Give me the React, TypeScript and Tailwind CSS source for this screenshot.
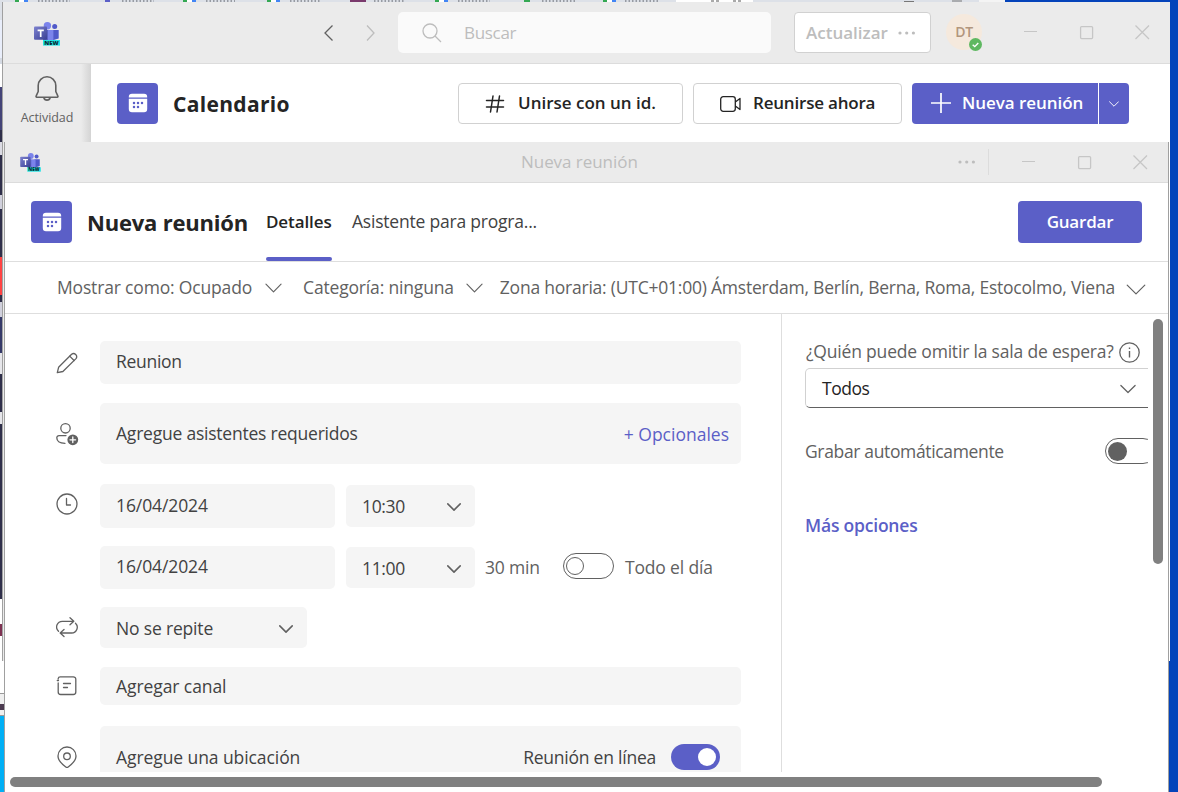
import type { ReactNode } from "react";

function TeamsLogo({ className }: { className: string }) {
  return (
    <svg viewBox="0 0 26 24" className={className}>
      <defs>
        <linearGradient id="teams-tile" x1="0" y1="0" x2="1" y2="1">
          <stop offset="0" stopColor="#7d82cf" />
          <stop offset="1" stopColor="#3a3f94" />
        </linearGradient>
      </defs>
      <circle cx="20.7" cy="4.4" r="2.5" fill="#5059c9" />
      <path d="M18 8H24.7V16.500L18 18.500Z" fill="#5059c9" />
      <circle cx="13.4" cy="3.800" r="3.700" fill="#7b83eb" />
      <path d="M9 8H19.400V18.500H9Z" fill="#7b83eb" />
      <path d="M9 8H14V18.500H9Z" fill="#5a62c3" />
      <rect x="0" y="4.600" width="13" height="13.200" rx="1" fill="url(#teams-tile)" />
      <path d="M3.600 8.400H9.800M6.700 8.400V15" stroke="#fff" strokeWidth="1.700" />
      <rect x="9" y="18" width="17" height="5.600" fill="#1fe3e3" />
      <text x="10.300" y="22.900" fontSize="5.800" fontWeight="800" textLength="14.400" lengthAdjust="spacingAndGlyphs" letterSpacing="0" fontFamily="Open Sans, sans-serif" fill="#0b2b33">NEW</text>
    </svg>
  );
}

function CalendarTile({ className }: { className: string }) {
  return (
    <div className={`flex w-[41px] shrink-0 items-center justify-center rounded-[4px] bg-[#5b5fc7] ${className}`}>
      <svg viewBox="0 0 20 20" className="size-[20px]">
        <path d="M.8 4.5V4A3.2 3.2 0 0 1 4 .8H16A3.2 3.2 0 0 1 19.2 4V4.5Z" fill="#fff" />
        <path d="M.8 5.700H19.200V16A3.200 3.200 0 0 1 16 19.200H4A3.200 3.200 0 0 1 .8 16Z" fill="#fff" />
        <g fill="#5b5fc7">
          <circle cx="6" cy="10" r="1.250" />
          <circle cx="10" cy="10" r="1.250" />
          <circle cx="14" cy="10" r="1.250" />
          <circle cx="6" cy="14" r="1.250" />
          <circle cx="10" cy="14" r="1.250" />
        </g>
      </svg>
    </div>
  );
}

function Chevron({ className }: { className: string }) {
  return (
    <svg viewBox="0 0 18 10" className={className} fill="none" stroke="currentColor">
      <path d="M1 1L9 9L17 1" strokeLinecap="round" strokeLinejoin="round" />
    </svg>
  );
}

function Dots({ className }: { className: string }) {
  return (
    <svg viewBox="0 0 18 4" className={className} fill="currentColor">
      <circle cx="2" cy="2" r="1.600" />
      <circle cx="8.700" cy="2" r="1.600" />
      <circle cx="15.400" cy="2" r="1.600" />
    </svg>
  );
}

function WindowControls() {
  return (
    <svg viewBox="0 0 126 15" className="h-[15px] w-[126px] shrink-0" fill="none" stroke="#c6c6c6">
      <path d="M0 6.500H13" />
      <rect x="56.600" y="1.600" width="12" height="12" rx="1" strokeWidth="1.300" />
      <path d="M111.500 .5L125 14M125 .5L111.500 14" strokeWidth="1.300" />
    </svg>
  );
}

function Icon({ children, className = "" }: { children: ReactNode; className?: string }) {
  return (
    <svg
      viewBox="0 0 22 22"
      className={`h-[22px] w-[22px] shrink-0 ${className}`}
      fill="none"
      stroke="#616161"
      strokeWidth="1.300"
      strokeLinecap="round"
      strokeLinejoin="round"
    >
      {children}
    </svg>
  );
}

function Desktop() {
  return (
    <div className="flex h-full w-full">
      <div className="flex w-[5px] flex-col">
        <div className="h-[20px] bg-[#dde1e8]" />
        <div className="h-[38px] bg-[#e9eefb]" />
        <div className="h-[6px] bg-[#d5dae3]" />
        <div className="h-[23px] bg-white" />
        <div className="h-[43px] bg-[#444478]" />
        <div className="h-[12px] bg-[#2f2f4a]" />
        <div className="h-[13px] bg-[#dcdce4]" />
        <div className="h-[40px] bg-[#2f2f4a]" />
        <div className="h-[14px] bg-[#d0d0dc]" />
        <div className="h-[48px] bg-[#2f2f4a]" />
        <div className="h-[38px] bg-[#ff4343]" />
        <div className="h-[7px] bg-[#2f2f4a]" />
        <div className="h-[15px] bg-[#d0d0dc]" />
        <div className="h-[36px] bg-[#353968]" />
        <div className="h-[21px] bg-[#e6e6ea]" />
        <div className="h-[38px] bg-[#2f2f4a]" />
        <div className="h-[12px] bg-[#e6e6ea]" />
        <div className="h-[175px] bg-[#2f2f4a]" />
        <div className="h-[25px] bg-white" />
        <div className="h-[12px] bg-[#7d3252]" />
        <div className="h-[57px] bg-white" />
        <div className="h-px bg-[#999]" />
        <div className="h-[21px] bg-[#efefef] pt-[10px]">
          <div className="h-[6px] w-[4px] bg-[#4b3a4f]" />
        </div>
        <div className="h-px bg-[#999]" />
        <div className="flex-1 bg-[#00aff5]" />
      </div>
      <div className="flex-1 bg-[#dde1e8]">
        <svg viewBox="0 0 1000 2" className="h-[2px] w-[1000px]">
          {[12, 180, 264, 432, 600].map((x) => (
            <g key={x}>
              <rect x={x - 2} width="4" height="2" fill="#34a853" />
              <rect x={x + 2} width="5" height="2" fill="#fff" />
              <rect x={x + 7} width="4" height="2" fill="#4285f4" />
            </g>
          ))}
          <rect x="100" width="5" height="2" fill="#5b5fc7" />
          <rect x="345" width="16" height="2" fill="#7a3a6d" />
          <rect x="519" width="6" height="2" fill="#34a853" />
          <path
            d="M33 1H65M117 1H149M201 1H230M285 1H316M369 1H400M453 1H485M537 1H570M620 1H653"
            stroke="#81858c"
            strokeWidth="1.400"
            strokeDasharray="1.5 2"
          />
          <rect x="671" width="77" height="2" fill="#fff" />
          <path d="M706 1H716M728 1H738" stroke="#555" strokeDasharray="3 2" />
          <path d="M899 1.500H909M947 1H957" stroke="#777" />
          <rect x="974" width="26" height="2" fill="#f4f4f4" />
        </svg>
      </div>
      <div className="w-[176px] bg-[#0443ba]" />
    </div>
  );
}

function MainWindow() {
  return (
    <section className="absolute top-[2px] left-[2px] flex h-[659px] w-[1168px] flex-col border-l border-[#a0a0a0] bg-white">
      <header className="flex h-[62px] shrink-0 border-b border-[#dcdcdc] bg-[#ebebeb]">
        <TeamsLogo className="mt-[20px] ml-[31px] h-[24px] w-[26px]" />
        <svg viewBox="0 0 54 18" className="mt-[22px] ml-[262px] h-[18px] w-[54px]" fill="none" strokeWidth="1.300">
          <path d="M10.500 1.500L3 9L10.500 16.500" stroke="#616161" />
          <path d="M45 1.500L52 9L45 16.500" stroke="#bdbdbd" />
        </svg>
        <div className="mt-[10px] ml-[22px] flex h-[41px] w-[373px] items-center rounded-[5px] bg-[#fafafa] pl-[24px]">
          <svg viewBox="0 0 20 20" className="size-[20px]" fill="none" stroke="#bdbdbd" strokeWidth="1.300">
            <circle cx="8" cy="8" r="7" />
            <path d="M13 13L19 19" />
          </svg>
          <span className="ml-[22px] text-[17px] tracking-[-0.3px] text-[#bdbdbd]">Buscar</span>
        </div>
        <div className="mt-[10px] ml-[23px] flex h-[41px] w-[137px] items-center rounded-[4px] border border-[#d1d1d1] bg-white pl-[11px] text-[#bdbdbd]">
          <span className="text-[17px] font-semibold tracking-[0]">Actualizar</span>
          <Dots className="ml-[10px] h-[4px] w-[18px]" />
        </div>
        <div className="relative mt-[12px] ml-[15px] flex size-[36px] items-center justify-center rounded-full bg-[#f5e9dd]">
          <span className="text-[14px] font-semibold tracking-[-0.3px] text-[#b2967d]">DT</span>
          <svg viewBox="0 0 14 14" className="absolute top-[24px] left-[23px] size-[13px]">
            <circle cx="7" cy="7" r="7" fill="#5fb861" />
            <path d="M4 7.200L6.200 9.300L10 5.300" fill="none" stroke="#fff" strokeWidth="1.500" />
          </svg>
        </div>
        <div className="mt-[23px] ml-[42px]">
          <WindowControls />
        </div>
      </header>
      <div className="flex flex-1">
        <nav className="flex w-[88px] shrink-0 bg-[#ebebeb]">
          <div className="flex w-[88px] shrink-0 flex-col items-center">
            <svg viewBox="0 0 24 28" className="mt-[11px] mr-[1px] h-[28px] w-[24px]" fill="none" stroke="#616161" strokeWidth="1.600" strokeLinejoin="round">
              <path d="M12 1.800A8.800 8.800 0 0 0 3.200 10.600V16.500L1.100 21.200A.7.7 0 0 0 1.700 22.200H22.300A.7.7 0 0 0 22.900 21.200L20.800 16.500V10.600A8.800 8.800 0 0 0 12 1.800Z" />
              <path d="M8.800 22.500A3.300 3.500 0 0 0 15.200 22.500" />
            </svg>
            <span className="mt-[5px] text-[12.500px] leading-[20px] tracking-[-0.050px] text-[#616161]">Actividad</span>
          </div>
          <div className="-ml-[10px] w-[10px] bg-linear-to-r from-[#ebebeb] to-[#d4d4d4]" />
        </nav>
        <div className="flex h-[78px] flex-1 items-center pl-[26px]">
          <CalendarTile className="h-[41px]" />
          <h1 className="mt-[2px] ml-[15px] w-[285px] text-[21px] font-bold tracking-[0.320px] text-[#242424]">Calendario</h1>
          <button className="flex h-[41px] w-[225px] items-center rounded-[4px] border border-[#d1d1d1] pb-px pl-[26px] text-[#242424]">
            <svg viewBox="0 0 20 18" className="mt-[2px] h-[18px] w-[20px]" fill="none" stroke="currentColor" strokeWidth="1.500" strokeLinecap="round">
              <path d="M1.500 5.500H18.500M1.500 12H18.500M8 1L5.500 17M14.500 1L12 17" />
            </svg>
            <span className="ml-[13px] text-[17px] font-semibold tracking-[0]">Unirse con un id.</span>
          </button>
          <button className="ml-[10px] flex h-[41px] w-[209px] items-center rounded-[4px] border border-[#d1d1d1] pb-px pl-[26px] text-[#242424]">
            <svg viewBox="0 0 21 16" className="mt-[2px] h-[16px] w-[21px]" fill="none" stroke="currentColor" strokeWidth="1.300" strokeLinejoin="round">
              <rect x=".7" y=".7" width="14.600" height="14.600" rx="2.500" />
              <path d="M15.300 6L20 2.500V13.500L15.300 10" />
            </svg>
            <span className="ml-[12px] text-[17px] font-semibold tracking-[-0.200px]">Reunirse ahora</span>
          </button>
          <div className="ml-[10px] flex h-[41px] w-[217px] rounded-[4px] bg-[#5b5fc7] text-white">
            <button className="flex w-[187px] items-center border-r border-white pb-px pl-[19px]">
              <svg viewBox="0 0 20 20" className="mt-[1px] size-[20px]" stroke="currentColor" strokeWidth="1.700">
                <path d="M0 10H20M10 0V20" />
              </svg>
              <span className="ml-[11px] text-[17px] font-semibold tracking-[-0.050px]">Nueva reunión</span>
            </button>
            <button className="flex flex-1 items-center justify-center">
              <Chevron className="mt-[2px] h-[6px] w-[10px] stroke-[1.7]" />
            </button>
          </div>
        </div>
      </div>
    </section>
  );
}

function Toggle({ on = false, filled = false, className = "" }: { on?: boolean; filled?: boolean; className?: string }) {
  if (on) {
    return (
      <div className={`flex h-[26px] w-[49px] shrink-0 items-center justify-end rounded-full bg-[#5b5fc7] pr-[4px] ${className}`}>
        <div className="size-[18px] rounded-full bg-white" />
      </div>
    );
  }
  return (
    <div className={`flex h-[26px] w-[51px] shrink-0 items-center rounded-full border border-[#616161] pl-[2px] ${className}`}>
      <div className={filled ? "size-[19px] rounded-full bg-[#616161]" : "size-[18px] rounded-full border border-[#616161]"} />
    </div>
  );
}

function Filter({ children, chevron, className = "" }: { children: ReactNode; chevron: string; className?: string }) {
  return (
    <button className={`flex items-center whitespace-pre ${className}`}>
      <span>{children}</span>
      <Chevron className={chevron} />
    </button>
  );
}

function TimeSelect({ value, className }: { value: string; className: string }) {
  return (
    <div className={`ml-[11px] flex w-[129px] items-center justify-between rounded-[5px] bg-[#f5f5f5] pr-[14px] pl-[16px] ${className}`}>
      <span className="tracking-[-0.350px]">{value}</span>
      <Chevron className="mt-[2px] h-[8px] w-[14px] stroke-2 text-[#616161]" />
    </div>
  );
}

function MeetingForm() {
  return (
    <div className="flex w-[776px] shrink-0 flex-col pt-[27px] pl-[51px] text-[#424242]">
      <div className="flex h-[43px] shrink-0 items-center">
        <Icon>
          <path d="M1.300 20.700L2.600 15.300L15.600 2.200A3.150 3.150 0 0 1 20 6.600L6.900 19.500Z" />
          <path d="M13.700 4.100L18.100 8.500" />
        </Icon>
        <div className="ml-[22px] flex h-[43px] w-[641px] items-center rounded-[5px] bg-[#f5f5f5] pb-[3px] pl-[16px] tracking-[-0.300px]">Reunion</div>
      </div>
      <div className="mt-[19px] flex h-[61px] shrink-0 items-center">
        <Icon className="overflow-visible">
          <circle cx="9.500" cy="5.300" r="4.700" />
          <path d="M10 12.600H3A2.200 2.200 0 0 0 .8 14.800C.8 18.500 4 20.300 9 20.300" />
          <circle cx="16.800" cy="16.800" r="5.400" fill="#616161" stroke="none" />
          <path d="M16.800 14V19.600M14 16.800H19.600" stroke="#fff" />
        </Icon>
        <div className="ml-[22px] flex h-[61px] w-[641px] items-center justify-between rounded-[5px] bg-[#f5f5f5] pr-[12px] pb-px pl-[16px]">
          <span className="tracking-[-0.220px]">Agregue asistentes requeridos</span>
          <span className="mt-[2px] tracking-[0] text-[#5b5fc7]">+ Opcionales</span>
        </div>
      </div>
      <div className="mt-[20px] flex h-[44px] shrink-0">
        <Icon className="mt-[9px]">
          <circle cx="11" cy="11" r="10" />
          <path d="M10.500 5.500V12H14.500" />
        </Icon>
        <div className="ml-[22px] flex w-[235px] items-center rounded-[5px] bg-[#f5f5f5] pb-[3px] pl-[16px] tracking-[-0.100px]">16/04/2024</div>
        <TimeSelect value="10:30" className="mt-[1px] h-[42px]" />
      </div>
      <div className="mt-[18px] flex h-[43px] shrink-0 pl-[44px]">
        <div className="flex w-[235px] items-center rounded-[5px] bg-[#f5f5f5] pb-[4px] pl-[16px] tracking-[-0.100px]">16/04/2024</div>
        <TimeSelect value="11:00" className="mt-[1px] h-[41px]" />
        <span className="ml-[10px] w-[78px] leading-[42px] text-[#616161]">30 min</span>
        <Toggle className="mt-[7px]" />
        <span className="ml-[11px] leading-[42px] text-[#616161]">Todo el día</span>
      </div>
      <div className="mt-[18px] flex h-[41px] shrink-0 items-center">
        <Icon>
          <path d="M14 .8L17.800 4.300L14 7.800M17.500 4.300H6.500A5.700 5.700 0 0 0 2.500 14.200M8 12.500L4.200 16L8 19.500M4.500 16H15.500A5.700 5.700 0 0 0 19.500 6.200" />
        </Icon>
        <div className="ml-[22px] flex h-[41px] w-[207px] items-center justify-between rounded-[5px] bg-[#f5f5f5] pr-[14px] pl-[16px]">
          <span className="mt-px">No se repite</span>
          <Chevron className="mt-[2px] h-[8px] w-[14px] stroke-2 text-[#616161]" />
        </div>
      </div>
      <div className="mt-[19px] flex h-[38px] shrink-0 items-center">
        <Icon>
          <path d="M2.200 4V3.500A2 2 0 0 1 4.200 1.800H17.300A2.500 2.500 0 0 1 19.800 4.300V17A2.500 2.500 0 0 1 17.300 19.500H4.700A2.500 2.500 0 0 1 2.200 17V8" />
          <path d="M7.500 8.500H14.500M7.500 12.500H11.500M1.300 5.500H2.500" />
        </Icon>
        <div className="ml-[22px] flex h-[38px] w-[641px] items-center rounded-[5px] bg-[#f5f5f5] pb-px pl-[16px] tracking-[-0.080px]">Agregar canal</div>
      </div>
      <div className="mt-[21px] flex h-[61px] shrink-0 items-center">
        <Icon className="overflow-visible">
          <path d="M11 1A9 9 0 0 0 2 10C2 14.500 5.500 17.800 9.800 21A2 2 0 0 0 12.200 21C16.500 17.800 20 14.500 20 10A9 9 0 0 0 11 1Z" />
          <circle cx="11" cy="10.300" r="3.300" />
        </Icon>
        <div className="ml-[22px] flex h-[61px] w-[641px] items-center rounded-[5px] bg-[#f5f5f5] pr-[21px] pl-[16px]">
          <span className="flex-1 tracking-[-0.080px]">Agregue una ubicación</span>
          <span className="tracking-[-0.230px]">Reunión en línea</span>
          <Toggle on className="ml-[15px]" />
        </div>
      </div>
    </div>
  );
}

function OptionsPanel() {
  return (
    <aside className="w-[367px] shrink-0 overflow-hidden border-l border-[#dedede] pt-[24px] pl-[23px] text-[#616161]">
      <div className="flex h-[30px] items-center justify-between pr-[8px]">
        <span className="pb-[5px] pl-px tracking-[-0.190px] whitespace-nowrap">¿Quién puede omitir la sala de espera?</span>
        <svg viewBox="0 0 21 21" className="mt-[-1px] size-[21px] shrink-0" fill="none" stroke="#616161" strokeWidth="1.300">
          <circle cx="10.500" cy="10.500" r="9.700" />
          <path d="M10.500 9V15.500M10.500 5.500V7" strokeWidth="1.400" />
        </svg>
      </div>
      <div className="flex h-[40px] w-[350px] items-center rounded-[5px] border border-[#d1d1d1] border-b-[#616161] pb-px pl-[16px] text-[#242424]">
        <span className="w-[298px] tracking-[-0.450px]">Todos</span>
        <Chevron className="mt-[3px] h-[10px] w-[16px] stroke-[1.4] text-[#616161]" />
      </div>
      <div className="mt-[30px] flex h-[26px] items-center">
        <span className="w-[300px] shrink-0 pb-px tracking-[-0.350px]">Grabar automáticamente</span>
        <Toggle filled />
      </div>
      <a className="mt-[49px] block leading-[24px] font-semibold tracking-[-0.200px] text-[#5b5fc7]">Más opciones</a>
    </aside>
  );
}

function MeetingWindow() {
  return (
    <section className="absolute top-[142px] left-[4px] flex h-[650px] w-[1165px] flex-col border-x border-[#a0a0a0] bg-white">
      <header className="flex h-[41px] shrink-0 border-b border-[#dcdcdc] bg-[#ebebeb] text-[#bdbdbd]">
        <TeamsLogo className="mt-[11px] ml-[15px] h-[19px] w-[21px]" />
        <span className="ml-[480px] w-[437px] text-[17px] leading-[39px] tracking-[-0.050px]">Nueva reunión</span>
        <Dots className="mt-[18px] h-[4px] w-[18px]" />
        <div className="mt-[7px] ml-[12px] h-[26px] w-px bg-[#dcdcdc]" />
        <div className="mt-[13px] ml-[33px]">
          <WindowControls />
        </div>
      </header>
      <div className="flex h-[79px] shrink-0 border-b border-[#dedede] pt-[18px] pl-[26px]">
        <CalendarTile className="h-[42px]" />
        <h2 className="ml-[15px] w-[179px] text-[22px] leading-[43px] font-bold tracking-[-0.200px] whitespace-nowrap text-[#242424]">Nueva reunión</h2>
        <div className="flex w-[66px] flex-col">
          <span className="flex-1 text-[17px] leading-[41px] font-semibold tracking-[-0.100px] text-[#242424]">Detalles</span>
          <div className="h-[4px] rounded-[2px] bg-[#5b5fc7]" />
        </div>
        <span className="ml-[20px] w-[666px] leading-[41px] tracking-[-0.210px] text-[#424242]">Asistente para progra...</span>
        <button className="h-[42px] w-[124px] rounded-[4px] bg-[#5b5fc7] text-[17px] font-semibold tracking-[-0.200px] text-white">Guardar</button>
      </div>
      <div className="flex h-[52px] shrink-0 items-center border-b border-[#dedede] pb-px pl-[52px] text-[#616161]">
        <Filter chevron="ml-[13px] mt-px h-[10px] w-[17px] stroke-[1.2]">Mostrar como: Ocupado</Filter>
        <Filter className="ml-[21px]" chevron="ml-[12px] mt-px h-[10px] w-[17px] stroke-[1.2]">Categoría: ninguna</Filter>
        <Filter className="ml-[17px] tracking-[-0.225px]" chevron="ml-[11px] mt-[4px] h-[11px] w-[20px] stroke-[1.1]">Zona horaria: (UTC+01:00) Ámsterdam, Berlín, Berna, Roma, Estocolmo, Viena</Filter>
      </div>
      <div className="flex h-[458px] shrink-0 overflow-hidden">
        <MeetingForm />
        <OptionsPanel />
        <div className="mt-[5px] ml-[5px] h-[245px] w-[10px] rounded-full bg-[#808080]" />
      </div>
      <div className="mt-[5px] ml-[5px] h-[10px] w-[1092px] shrink-0 rounded-full bg-[#808080]" />
    </section>
  );
}

export default function App() {
  return (
    <main className="relative h-[792px] w-[1178px] overflow-hidden font-['Open_Sans','Noto_Sans',sans-serif] text-[17.5px] leading-[24px] tracking-[-0.17px]">
      <Desktop />
      <MainWindow />
      <MeetingWindow />
    </main>
  );
}
